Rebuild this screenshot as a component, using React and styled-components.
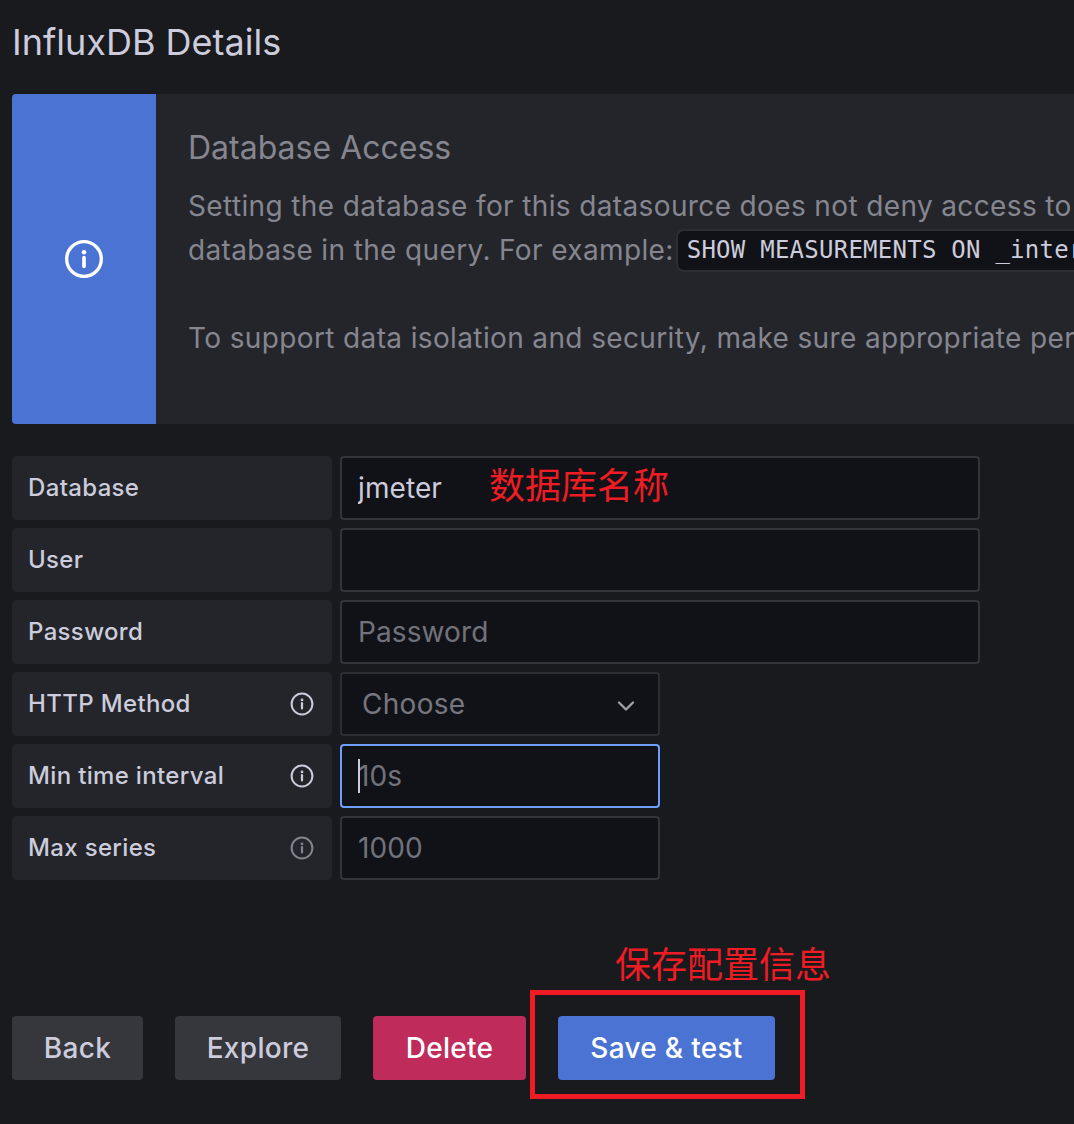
import React from 'react'
import styled, { createGlobalStyle } from 'styled-components'
import { ChevronDown } from 'lucide-react'

const GlobalStyle = createGlobalStyle`
  html, body {
    margin: 0;
    background: #191a1e;
    overflow: hidden;
  }
  * { box-sizing: border-box; }
`

const Page = styled.div`
  position: relative;
  width: 1074px;
  height: 1124px;
  padding: 18px 0 0 12px;
  background: #191a1e;
  overflow: hidden;
  font-family: Inter, "Noto Sans CJK SC", sans-serif;
  color: #ccccdc;
`

const Title = styled.h3`
  margin: 0 0 28px;
  height: 48px;
  font-size: 36px;
  line-height: 48px;
  font-weight: 400;
  color: #ccccdc;
`

const Alert = styled.div`
  display: flex;
  width: 1500px;
  height: 330px;
  background: #23252a;
  border-radius: 4px;
  overflow: hidden;
`

const AlertIcon = styled.div`
  flex: 0 0 144px;
  display: flex;
  align-items: center;
  justify-content: center;
  background: #4a73d4;
`

const AlertBody = styled.div`
  padding: 32px 0 0 32px;
  color: #868690;
`

const AlertTitle = styled.div`
  height: 44px;
  font-size: 32px;
  line-height: 44px;
  margin-bottom: 14px;
`

const AlertLine = styled.div`
  height: 44px;
  display: flex;
  align-items: center;
  font-size: 28px;
  line-height: 44px;
  letter-spacing: 0.37px;
  white-space: pre;
  margin-bottom: ${p => p.$gap || 0}px;
`

const Code = styled.code`
  display: inline-flex;
  align-items: center;
  height: 43px;
  margin-left: 2px;
  padding: 0 9px;
  background: #111217;
  border: 2px solid #2c2e33;
  border-radius: 8px;
  font-family: "DejaVu Sans Mono", monospace;
  font-size: 24px;
  letter-spacing: 0.25px;
  color: #ccccdc;
`

const Form = styled.div`
  display: flex;
  flex-direction: column;
  gap: 8px;
  margin-top: 32px;
`

const Row = styled.div`
  display: flex;
  gap: 8px;
  height: 64px;
`

const Label = styled.div`
  flex: 0 0 320px;
  display: flex;
  align-items: center;
  justify-content: space-between;
  padding: 0 18px 0 16px;
  background: #23252a;
  border-radius: 4px;
  font-size: 24px;
  font-weight: 500;
  line-height: 30px;
  letter-spacing: 0.34px;
  color: #ccccdc;
`

const LabelText = styled.span`
  margin-bottom: 1px;
`

const Field = styled.div`
  position: relative;
  width: ${p => p.$width}px;
  height: 64px;
`

const Input = styled.input`
  display: block;
  width: 100%;
  height: 100%;
  padding: 0 16px;
  background: #111217;
  border: 2px solid ${p => (p.$focused ? '#6e9fff' : '#33353a')};
  border-radius: 4px;
  outline: none;
  font-family: Inter, sans-serif;
  font-size: 28px;
  letter-spacing: 0.1px;
  color: #ccccdc;

  &::placeholder {
    color: #72727c;
    opacity: 1;
  }
`

const Caret = styled.span`
  position: absolute;
  left: 18px;
  top: 15px;
  width: 2px;
  height: 34px;
  background: #ccccdc;
`

const Select = styled.div`
  display: flex;
  align-items: center;
  justify-content: space-between;
  width: 320px;
  height: 64px;
  padding: 0 18px 0 20px;
  background: #111217;
  border: 2px solid #2c2e33;
  border-radius: 4px;
  font-size: 28px;
  letter-spacing: 0.3px;
  color: #76767f;
`

const Chevron = styled(ChevronDown)`
  margin-top: 4px;
  color: #a0a0aa;
`

const Actions = styled.div`
  display: flex;
  gap: 32px;
  margin-top: 136px;
`

const Button = styled.button`
  width: ${p => p.$width}px;
  height: 64px;
  padding: 0;
  border: none;
  border-radius: 4px;
  font-family: Inter, sans-serif;
  font-size: 28px;
  font-weight: 500;
  letter-spacing: 0.3px;
  background: ${p => p.$bg};
  color: ${p => p.$color};
`

const Note = styled.span`
  position: absolute;
  left: ${p => p.$x}px;
  top: ${p => p.$y}px;
  font-family: "Noto Sans CJK SC", sans-serif;
  font-size: 36px;
  line-height: 44px;
  color: #ef1c24;
  white-space: nowrap;
`

const Highlight = styled.div`
  position: absolute;
  left: 530px;
  top: 990px;
  width: 275px;
  height: 109px;
  border: 5px solid #ef1c24;
`

const InfoIcon = ({ size, color, width = 2 }) => (
  <svg width={size} height={size} viewBox="0 0 24 24" fill="none">
    <circle cx="12" cy="12" r="10.4" stroke={color} strokeWidth={width} />
    <circle cx="12" cy="7.9" r="1.35" fill={color} />
    <path d="M12 11.2v5.3" stroke={color} strokeWidth={width * 1.1} strokeLinecap="round" />
  </svg>
)

const App = () => (
  <Page>
    <GlobalStyle />
    <Title>InfluxDB Details</Title>
    <Alert>
      <AlertIcon>
        <InfoIcon size={40} color="#fff" />
      </AlertIcon>
      <AlertBody>
        <AlertTitle>Database Access</AlertTitle>
        <AlertLine>Setting the database for this datasource does not deny access to other databases. The InfluxDB query</AlertLine>
        <AlertLine $gap={44}>
          database in the query. For example:<Code>SHOW MEASUREMENTS ON _internal</Code>
        </AlertLine>
        <AlertLine>To support data isolation and security, make sure appropriate permissions are configured in InfluxDB.</AlertLine>
      </AlertBody>
    </Alert>
    <Form>
      <Row>
        <Label><LabelText>Database</LabelText></Label>
        <Field $width={640}>
          <Input readOnly value="jmeter" />
        </Field>
      </Row>
      <Row>
        <Label><LabelText>User</LabelText></Label>
        <Field $width={640}>
          <Input readOnly />
        </Field>
      </Row>
      <Row>
        <Label><LabelText>Password</LabelText></Label>
        <Field $width={640}>
          <Input readOnly placeholder="Password" />
        </Field>
      </Row>
      <Row>
        <Label>
          <LabelText>HTTP Method</LabelText>
          <InfoIcon size={24} color="#ccccdc" />
        </Label>
        <Select>
          Choose
          <Chevron size={28} strokeWidth={2} />
        </Select>
      </Row>
      <Row>
        <Label>
          <LabelText>Min time interval</LabelText>
          <InfoIcon size={24} color="#ccccdc" />
        </Label>
        <Field $width={320}>
          <Input readOnly $focused placeholder="10s" />
          <Caret />
        </Field>
      </Row>
      <Row>
        <Label>
          <LabelText>Max series</LabelText>
          <InfoIcon size={24} color="#85858f" />
        </Label>
        <Field $width={320}>
          <Input readOnly placeholder="1000" />
        </Field>
      </Row>
    </Form>
    <Actions>
      <Button $width={131} $bg="#36373d" $color="#ccccdc">Back</Button>
      <Button $width={166} $bg="#36373d" $color="#ccccdc">Explore</Button>
      <Button $width={153} $bg="#bf2c5c" $color="#fff">Delete</Button>
      <Button $width={217} $bg="#4a73d4" $color="#fff">Save &amp; test</Button>
    </Actions>
    <Note $x={489} $y={461}>数据库名称</Note>
    <Note $x={615} $y={940}>保存配置信息</Note>
    <Highlight />
  </Page>
)

export default App
